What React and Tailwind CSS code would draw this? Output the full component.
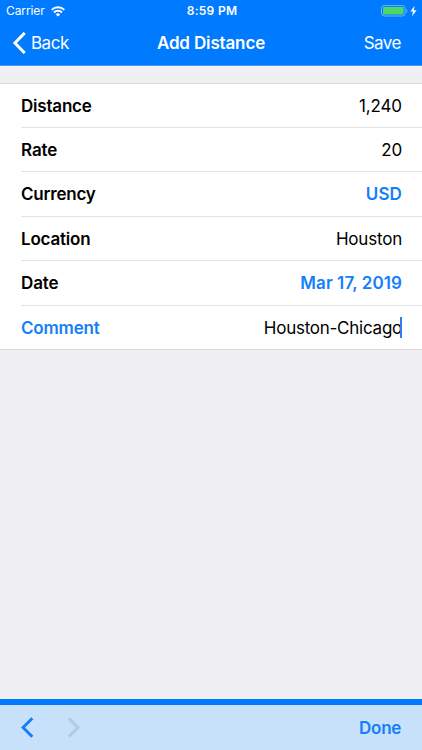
const rows = [
  { label: "Distance", value: "1,240", height: "h-11", labelTracking: "tracking-[-0.2px]", valueTracking: "tracking-[-0.1px]" },
  { label: "Rate", value: "20", height: "h-11", labelTracking: "tracking-[-0.1px]", valueTracking: "tracking-[-0.2px]" },
  { label: "Currency", value: "USD", height: "h-[45px]", accent: true, labelTracking: "tracking-[-0.2px]", valueTracking: "tracking-[0.1px]" },
  { label: "Location", value: "Houston", height: "h-11", labelTracking: "tracking-[-0.2px]", valueTracking: "tracking-[-0.2px]" },
  { label: "Date", value: "Mar 17, 2019", height: "h-[45px]", accent: true, labelTracking: "tracking-[-0.1px]", valueTracking: "tracking-[0.1px]" },
  { label: "Comment", value: "Houston-Chicago", height: "h-[43px]", editing: true, labelTracking: "tracking-[-0.2px]", valueTracking: "tracking-[-0.25px]" },
];

function WifiIcon() {
  return (
    <svg width="14" height="11" viewBox="0 0 14 11" fill="none" stroke="white" strokeWidth="2">
      <path d="M0.7 3.9a9 9 0 0 1 12.6 0" />
      <path d="M3 6.5a5.6 5.6 0 0 1 8 0" />
      <path d="M7 10.6L4.8 8.4a3.1 3.1 0 0 1 4.4 0z" fill="white" stroke="none" />
    </svg>
  );
}

function BatteryIcon() {
  return (
    <svg width="37" height="12" viewBox="0 0 37 12" fill="none">
      <rect x="0.5" y="0.6" width="23.6" height="10.4" rx="2.8" stroke="#73b4ff" />
      <rect x="2" y="2" width="20.6" height="7.6" rx="1.2" fill="#4cd964" />
      <path d="M25.4 4v4c1.5-.6 1.5-3.4 0-4z" fill="#73b4ff" />
      <path d="M33.6 0.8l-4.2 5.7h2.6L31 11.2l4.6-6h-2.8z" fill="white" />
    </svg>
  );
}

function Row({ row }) {
  return (
    <div
      className={`${row.height} flex items-center justify-between border-b border-[#e3e3e5] pr-5 text-[17px] last:border-0`}
    >
      <span className={`${row.labelTracking} font-semibold ${row.editing ? "text-[#147efb]" : "text-black"}`}>
        {row.label}
      </span>
      <span
        className={`${row.valueTracking} relative ${row.accent ? "font-semibold text-[#147efb]" : "text-black"}`}
      >
        {row.value}
        {row.editing && <span className="absolute top-[1px] right-0 h-[21px] w-[2px] bg-[#3478f6]" />}
      </span>
    </div>
  );
}

export default function App() {
  return (
    <div className="flex h-[750px] w-[422px] flex-col overflow-hidden bg-[#efeff4] font-['Inter',sans-serif] leading-6">
      <header className="h-[66px] border-b border-[#4b9bf5] bg-[#007aff] text-white">
        <div className="grid h-[22px] grid-cols-[1fr_auto_1fr] items-center pr-1 pl-[6px] text-xs">
          <div className="flex items-center gap-[6px]">
            <span className="tracking-[-0.1px]">Carrier</span>
            <WifiIcon />
          </div>
          <span className="text-center font-semibold tracking-[0.3px]">8:59 PM</span>
          <div className="flex justify-end">
            <BatteryIcon />
          </div>
        </div>
        <div className="grid h-[42px] grid-cols-[1fr_auto_1fr] items-center px-[13px] text-[17px]">
          <div className="flex items-center gap-[5px]">
            <svg width="13" height="22" viewBox="0 0 13 22" fill="none" stroke="white" strokeWidth="3">
              <path d="M11.7 1L1.9 11l9.8 10" />
            </svg>
            <span className="tracking-[-0.5px]">Back</span>
          </div>
          <span className="text-center font-semibold whitespace-nowrap tracking-[-0.15px]">Add Distance</span>
          <span className="pr-2 text-right tracking-[-0.5px]">Save</span>
        </div>
      </header>

      <main className="mt-[17px] border-y border-[#d9d9de] bg-white pl-[21px]">
        {rows.map((row) => (
          <Row key={row.label} row={row} />
        ))}
      </main>

      <footer className="mt-auto flex h-[51px] items-center border-t-[6px] border-[#007aff] bg-[#c7e1fa] pr-[21px] pl-[21px]">
        <svg width="13" height="21" viewBox="0 0 13 21" fill="none" stroke="#147efb" strokeWidth="3">
          <path d="M11.3 1.2L2.1 10.5l9.2 9.3" />
        </svg>
        <svg className="ml-[33px]" width="13" height="21" viewBox="0 0 13 21" fill="none" stroke="#b4cbe1" strokeWidth="3">
          <path d="M1.7 1.2l9.2 9.3-9.2 9.3" />
        </svg>
        <span className="ml-auto text-[17px] font-semibold tracking-[-0.3px] text-[#147efb]">Done</span>
      </footer>
    </div>
  );
}
